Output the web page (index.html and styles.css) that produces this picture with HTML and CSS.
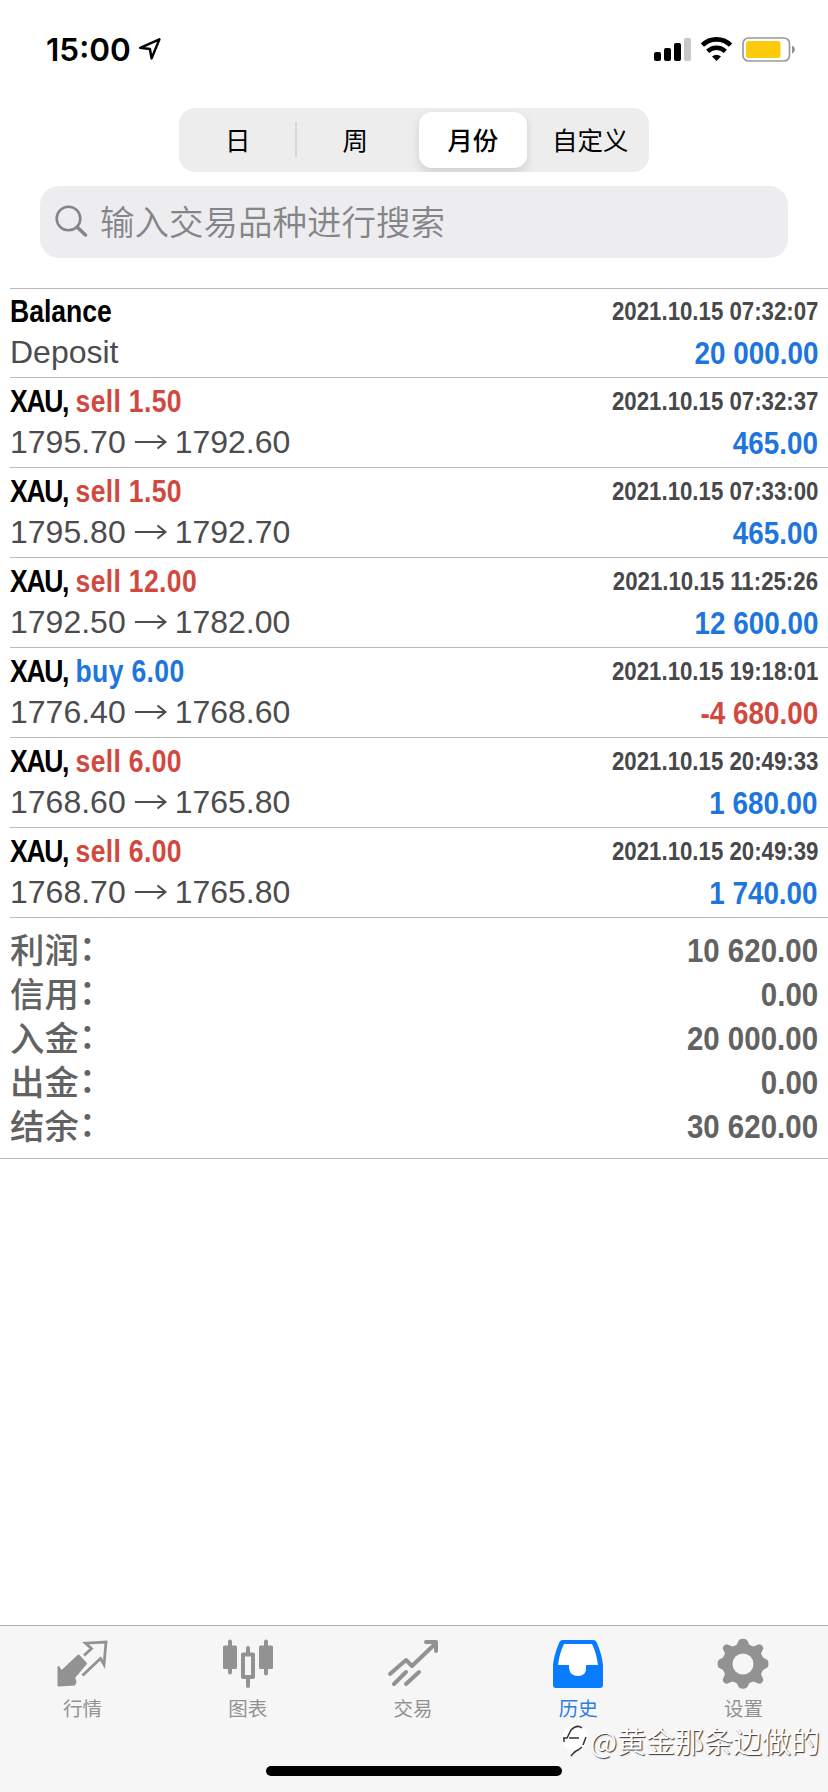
FILE: index.html
```html
<!DOCTYPE html>
<html lang="zh-CN">
<head>
<meta charset="utf-8">
<title>历史</title>
<link rel="stylesheet" href="styles.css">
</head>
<body>
<div class="screen">
  <header class="status">
    <span class="clock">15:00</span>
    <svg class="location" width="24" height="24" viewBox="0 0 24 24"><path d="M2.200 10.800 21.400 2.400 13.600 21.400 11.900 12Z" fill="none" stroke="#000" stroke-width="2.500" stroke-linejoin="round"/></svg>
    <svg class="signals" width="144" height="28" viewBox="0 0 144 28">
      <rect x="3" y="16" width="7" height="9" rx="2"/><rect x="13" y="12" width="7" height="13" rx="2"/><rect x="23" y="7" width="7" height="18" rx="2"/><rect x="33" y="2" width="7" height="23" rx="2" fill="#c8c8c8"/>
      <g fill="none" stroke="#000" stroke-width="4.600"><path d="M51.400 9.200A20 20 0 0 1 79.600 9.200"/><path d="M56.700 15.400A12.500 12.500 0 0 1 74.300 15.400"/></g>
      <path d="M61 20.600Q65.500 16.800 70 20.600L65.500 25Z"/>
      <rect x="92" y="2" width="46.500" height="23" rx="5.500" fill="none" stroke="#9a9a9a" stroke-width="1.700"/>
      <rect x="95" y="5" width="34.500" height="17" rx="2.500" fill="#fccb0c"/>
      <path d="M141 9.500Q144 11 144 13.500T141 17.500Z" fill="#909090"/>
    </svg>
  </header>

  <nav class="segments">
    <span class="segment divided">日</span>
    <span class="segment">周</span>
    <span class="segment"><b class="selected">月份</b></span>
    <span class="segment">自定义</span>
  </nav>

  <div class="search">
    <svg width="34" height="34" viewBox="0 0 34 34" fill="none" stroke="#858589"><circle cx="13.500" cy="13.500" r="11.800" stroke-width="2.600"/><path d="M22 22 30.500 30" stroke-width="3.500" stroke-linecap="round"/></svg>
    <span class="placeholder">输入交易品种进行搜索</span>
  </div>

  <main class="deals">
    <section class="deal">
      <div class="line"><b class="title">Balance</b><time class="date">2021.10.15 07:32:07</time></div>
      <div class="line"><span class="price">Deposit</span><b class="amount">20 000.00</b></div>
    </section>
    <section class="deal">
      <div class="line"><b class="title"><span class="symbol">XAU,</span> <span class="sell">sell 1.50</span></b><time class="date">2021.10.15 07:32:37</time></div>
      <div class="line"><span class="price">1795.70<svg class="arrow" viewBox="0 0 49 20"><path d="M9 10H39.500M31.500 3.500 39.500 10 31.500 16.500"/></svg>1792.60</span><b class="amount">465.00</b></div>
    </section>
    <section class="deal">
      <div class="line"><b class="title"><span class="symbol">XAU,</span> <span class="sell">sell 1.50</span></b><time class="date">2021.10.15 07:33:00</time></div>
      <div class="line"><span class="price">1795.80<svg class="arrow" viewBox="0 0 49 20"><path d="M9 10H39.500M31.500 3.500 39.500 10 31.500 16.500"/></svg>1792.70</span><b class="amount">465.00</b></div>
    </section>
    <section class="deal">
      <div class="line"><b class="title"><span class="symbol">XAU,</span> <span class="sell">sell 12.00</span></b><time class="date">2021.10.15 11:25:26</time></div>
      <div class="line"><span class="price">1792.50<svg class="arrow" viewBox="0 0 49 20"><path d="M9 10H39.500M31.500 3.500 39.500 10 31.500 16.500"/></svg>1782.00</span><b class="amount">12 600.00</b></div>
    </section>
    <section class="deal">
      <div class="line"><b class="title"><span class="symbol">XAU,</span> <span class="buy">buy 6.00</span></b><time class="date">2021.10.15 19:18:01</time></div>
      <div class="line"><span class="price">1776.40<svg class="arrow" viewBox="0 0 49 20"><path d="M9 10H39.500M31.500 3.500 39.500 10 31.500 16.500"/></svg>1768.60</span><b class="amount loss">-4 680.00</b></div>
    </section>
    <section class="deal">
      <div class="line"><b class="title"><span class="symbol">XAU,</span> <span class="sell">sell 6.00</span></b><time class="date">2021.10.15 20:49:33</time></div>
      <div class="line"><span class="price">1768.60<svg class="arrow" viewBox="0 0 49 20"><path d="M9 10H39.500M31.500 3.500 39.500 10 31.500 16.500"/></svg>1765.80</span><b class="amount">1 680.00</b></div>
    </section>
    <section class="deal">
      <div class="line"><b class="title"><span class="symbol">XAU,</span> <span class="sell">sell 6.00</span></b><time class="date">2021.10.15 20:49:39</time></div>
      <div class="line"><span class="price">1768.70<svg class="arrow" viewBox="0 0 49 20"><path d="M9 10H39.500M31.500 3.500 39.500 10 31.500 16.500"/></svg>1765.80</span><b class="amount">1 740.00</b></div>
    </section>
  </main>

  <section class="summary">
    <div class="total"><span>利润<i class="colon">：</i></span><b>10 620.00</b></div>
    <div class="total"><span>信用<i class="colon">：</i></span><b>0.00</b></div>
    <div class="total"><span>入金<i class="colon">：</i></span><b>20 000.00</b></div>
    <div class="total"><span>出金<i class="colon">：</i></span><b>0.00</b></div>
    <div class="total"><span>结余<i class="colon">：</i></span><b>30 620.00</b></div>
  </section>

  <footer class="tabbar">
    <div class="tabs">
      <div class="tab">
        <svg class="icon" viewBox="0 0 52 52"><path d="M21.500 18.500 29 26.500 17 40.500 18.500 44.500 17.500 47.500 1.500 48.500V30L4.500 34.500Z" fill="#929292" stroke="#929292" stroke-width="2" stroke-linejoin="round"/><path d="M27 18.500 34.500 11.500 28.500 6.200 49 5 47 27.500 43.500 21.500 25.500 38.500" fill="none" stroke="#929292" stroke-width="2.800"/></svg>
        <span>行情</span>
      </div>
      <div class="tab">
        <svg class="icon" viewBox="0 0 52 52"><g stroke="#929292" stroke-width="4" stroke-linecap="round"><path d="M8 4.500V35.500M44 4.500V36.500M26 11V17M26 41V49"/></g><g fill="#929292"><rect x="1" y="8.500" width="14" height="23.500" rx="1.500"/><rect x="37" y="8.500" width="14" height="23.500" rx="1.500"/></g><rect x="21" y="17.500" width="10" height="22.500" fill="none" stroke="#929292" stroke-width="4" stroke-linejoin="round"/></svg>
        <span>图表</span>
      </div>
      <div class="tab">
        <svg class="icon" viewBox="0 0 52 52" fill="none" stroke="#929292" stroke-width="4" stroke-linecap="round" stroke-linejoin="round"><path d="M3 37 19 23 25 29 48 7M39 5H49V14M7 47 19 35M19 47 32 35"/></svg>
        <span>交易</span>
      </div>
      <div class="tab active">
        <svg class="icon" viewBox="0 0 52 52"><path fill="#087bff" d="M11 3H41Q44 3 45 6 50 18 51 28V48Q51 51 48 51H4Q1 51 1 48V28Q2 18 7 6 8 3 11 3Z"/><path fill="#fff" d="M12 7Q7.500 16 6 28H17V31Q18 39 26 39T34 31V28H46Q44.500 16 40 7Z"/></svg>
        <span>历史</span>
      </div>
      <div class="tab">
        <svg class="icon" viewBox="0 0 52 52"><path d="M22 3Q26 .500 30 3L32.500 8 36.500 9.500 42 7.200Q46 7.500 46.300 11.500L44 16.500 46 20.500 50.500 23Q52.500 27 50.500 30.500L46 33 44 37 46.300 42.500Q46 46.500 42 46.800L36.500 44.500 32.500 46 30 50.500Q26 53 22 50.500L19.500 46 15.500 44.500 10 46.800Q6 46.500 5.700 42.500L8 37 6 33 1.500 30.500Q-.500 27 1.500 23L6 20.500 8 16.500 5.700 11.500Q6 7.500 10 7.200L15.500 9.500 19.500 8Z" fill="#929292"/><circle cx="26" cy="27" r="10.500" fill="#f7f7f7"/></svg>
        <span>设置</span>
      </div>
    </div>
    <div class="home"></div>
    <div class="watermark"><svg width="28" height="36" viewBox="0 0 28 36"><circle cx="14" cy="16" r="13" fill="#fff"/><path d="M2 16H6L10 8Q16 2 21 6M8 16H18M3 16V20M21 25 17 28Q14 29 10 34M25 15 22 23" fill="none" stroke="#333" stroke-width="1.500"/></svg><span>@黄金那条边做的</span></div>
  </footer>
</div>
</body>
</html>
```
FILE: styles.css
```css
* { box-sizing: border-box; }
body { margin: 0; background: #fff; font-family: "Liberation Sans", "Noto Sans CJK SC", sans-serif; }
.screen { width: 828px; height: 1792px; display: flex; flex-direction: column; overflow: hidden; }
svg { display: block; flex: none; }

.status { height: 108px; display: flex; align-items: flex-start; padding: 36px 33px 0 46px; }
.clock { width: 92px; font: 600 31.5px/28px Inter, sans-serif; }
.location { margin-top: 1px; }
.signals { margin-left: auto; }

.segments { width: 470px; height: 64px; margin-left: 179px; display: grid; grid-template-columns: repeat(4, 1fr); border-radius: 16px; background: #ededed; overflow: hidden; }
.segment { display: flex; align-items: center; justify-content: center; position: relative; padding-bottom: 3px; font: 400 25.5px/54px "Noto Sans CJK SC", sans-serif; color: #000; }
.divided::after { content: ""; position: absolute; right: 0; top: 14px; width: 2px; height: 35px; background: #d6d6d6; }
.selected { width: 108px; height: 56px; margin-top: 3px; border-radius: 13px; background: #fff; text-align: center; font-weight: 500; line-height: 53px; box-shadow: 0 4px 10px rgba(0, 0, 0, .13); }

.search { height: 72px; margin: 14px 40px 0; padding-left: 15px; display: flex; align-items: center; gap: 11px; border-radius: 19px; background: #ededef; }
.placeholder { padding-bottom: 4px; font: 350 34.5px/68px "Noto Sans CJK SC", sans-serif; color: #858589; }

.deals { margin: 30px 0 0 10px; border-top: 1px solid #bcbcbe; }
.deal { height: 90px; display: flex; flex-direction: column; border-bottom: 1px solid #bcbcbe; }
.deal:first-child { height: 89px; }
.deal:first-child .line:first-child { height: 45px; line-height: 45px; }
.line { display: flex; justify-content: space-between; height: 46px; line-height: 46px; padding-right: 10px; white-space: nowrap; }
.line + .line { height: 37px; line-height: 36px; }
.title { font-size: 32px; transform: scaleX(.83); transform-origin: left; }
.symbol { letter-spacing: -1.6px; }
.date { font-size: 26px; font-weight: 700; color: #48484a; transform: scaleX(.855); transform-origin: right; }
.price { display: flex; font-size: 32px; color: #4c4c4e; }
.arrow { width: 49px; height: 20px; margin-top: 8px; fill: none; stroke: #4c4c4e; stroke-width: 2; }
.amount { font-size: 32px; line-height: 38px; color: #1e75dc; transform: scaleX(.87); transform-origin: right; }
.sell, .loss { color: #d3483e; }
.sell, .buy { letter-spacing: .4px; }
.buy { color: #1e75dc; }

.summary { height: 241px; padding: 8px 10px 0; border-bottom: 1px solid #bcbcbe; color: #626262; }
.total { height: 44px; display: flex; justify-content: space-between; font: 500 34.4px/44px "Noto Sans CJK SC", sans-serif; }
.colon { font-style: normal; line-height: 1; vertical-align: 3px; }
.total b { font: 700 33.5px/49px "Liberation Sans", sans-serif; transform: scaleX(.88); transform-origin: right; }

.tabbar { height: 167px; margin-top: auto; border-top: 1px solid #b0b0b2; background: #f6f6f6; position: relative; display: flex; flex-direction: column; align-items: center; }
.tabs { width: 100%; height: 140px; padding: 11px 2px 0 0; display: grid; grid-template-columns: repeat(5, 1fr); }
.tab { display: flex; flex-direction: column; align-items: center; gap: 5px; font: 400 19.5px/28px "Noto Sans CJK SC", sans-serif; color: #929292; }
.icon { width: 52px; height: 52px; }
.active { color: #087bff; }
.active span { color: #2f7de0; }
.home { width: 296px; height: 10px; border-radius: 5px; background: #000; }
.watermark { position: absolute; left: 561px; top: 94px; display: flex; align-items: center; font: 350 29px/40px "Noto Sans CJK SC", sans-serif; color: #fff; text-shadow: 1px 1px 1px #333; white-space: nowrap; }
.watermark span { margin-left: 1px; }
```
